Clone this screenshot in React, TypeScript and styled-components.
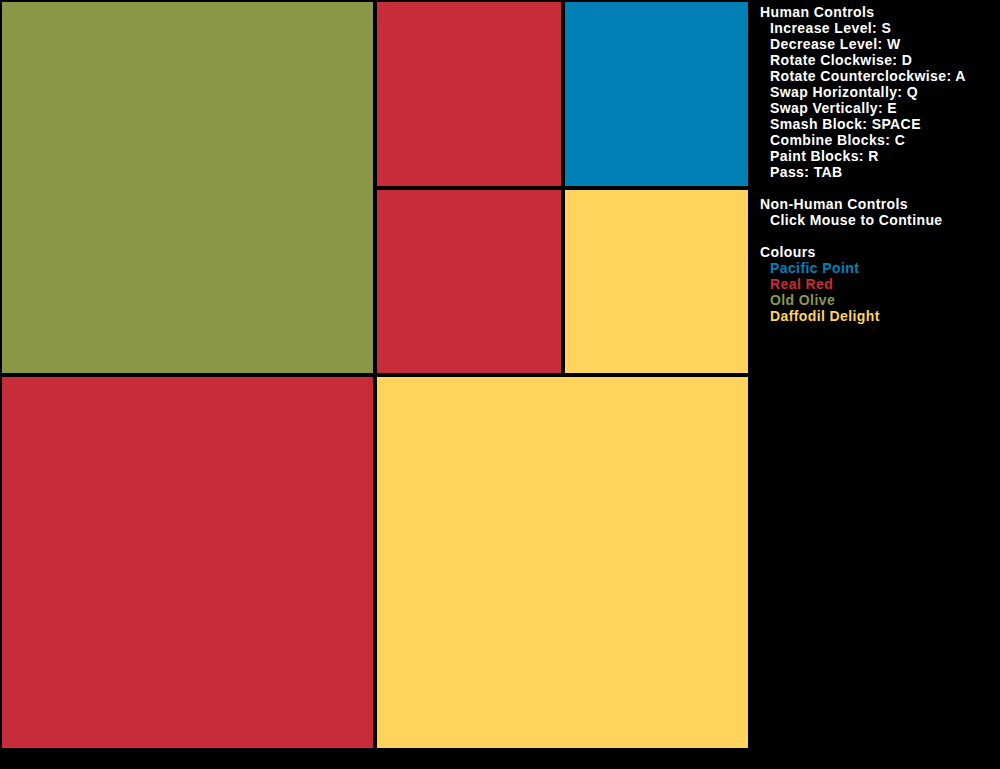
import React from "react";
import styled, { createGlobalStyle } from "styled-components";

const PACIFIC_POINT = "rgb(1, 128, 181)";
const REAL_RED = "rgb(199, 44, 58)";
const OLD_OLIVE = "rgb(138, 151, 71)";
const DAFFODIL_DELIGHT = "rgb(255, 211, 92)";

const Global = createGlobalStyle`
  html, body {
    margin: 0;
    padding: 0;
    background: #000;
  }
  #root {
    min-height: 769px;
    background: #000;
  }
`;

const Screen = styled.div`
  display: flex;
  align-items: flex-start;
  width: 1000px;
  height: 769px;
  background: #000;
`;

const Board = styled.div`
  display: grid;
  grid-template-columns: 375px 375px;
  grid-template-rows: 375px 375px;
  width: 750px;
  height: 750px;
  flex: none;
`;

const Quad = styled.div`
  display: grid;
  grid-template-columns: 1fr 1fr;
  grid-template-rows: 1fr 1fr;
`;

const Block = styled.div<{ $color: string }>`
  box-sizing: border-box;
  border: 2px solid #000;
  background: ${(p) => p.$color};
`;

const Panel = styled.div`
  padding: 4px 0 0 10px;
  font-family: "Liberation Sans", Arial, sans-serif;
  font-weight: bold;
  font-size: 14px;
  line-height: 16px;
  letter-spacing: 0.4px;
  color: #fff;
`;

const Group = styled.div`
  & + & {
    margin-top: 16px;
  }
`;

const Heading = styled.div`
  white-space: nowrap;
`;

const Item = styled.div<{ $color?: string }>`
  padding-left: 10px;
  white-space: nowrap;
  color: ${(p) => p.$color ?? "#fff"};
`;

const human = [
  "Increase Level: S",
  "Decrease Level: W",
  "Rotate Clockwise: D",
  "Rotate Counterclockwise: A",
  "Swap Horizontally: Q",
  "Swap Vertically: E",
  "Smash Block: SPACE",
  "Combine Blocks: C",
  "Paint Blocks: R",
  "Pass: TAB",
];

const colours: [string, string][] = [
  ["Pacific Point", PACIFIC_POINT],
  ["Real Red", REAL_RED],
  ["Old Olive", OLD_OLIVE],
  ["Daffodil Delight", DAFFODIL_DELIGHT],
];

export default function App() {
  return (
    <>
      <Global />
      <Screen>
        <Board>
          <Block $color={OLD_OLIVE} />
          <Quad>
            <Block $color={REAL_RED} />
            <Block $color={PACIFIC_POINT} />
            <Block $color={REAL_RED} />
            <Block $color={DAFFODIL_DELIGHT} />
          </Quad>
          <Block $color={REAL_RED} />
          <Block $color={DAFFODIL_DELIGHT} />
        </Board>
        <Panel>
          <Group>
            <Heading>Human Controls</Heading>
            {human.map((h) => (
              <Item key={h}>{h}</Item>
            ))}
          </Group>
          <Group>
            <Heading>Non-Human Controls</Heading>
            <Item>Click Mouse to Continue</Item>
          </Group>
          <Group>
            <Heading>Colours</Heading>
            {colours.map(([n, c]) => (
              <Item key={n} $color={c}>
                {n}
              </Item>
            ))}
          </Group>
        </Panel>
      </Screen>
    </>
  );
}
